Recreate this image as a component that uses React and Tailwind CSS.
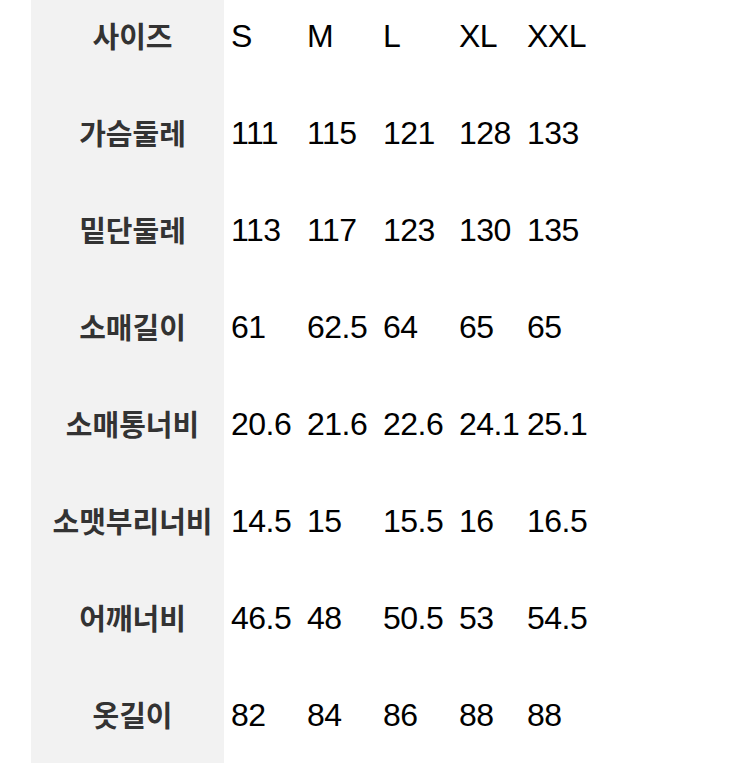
import React from 'react';

const rows = [
  { label: '사이즈', values: ['S', 'M', 'L', 'XL', 'XXL'] },
  { label: '가슴둘레', values: ['111', '115', '121', '128', '133'] },
  { label: '밑단둘레', values: ['113', '117', '123', '130', '135'] },
  { label: '소매길이', values: ['61', '62.5', '64', '65', '65'] },
  { label: '소매통너비', values: ['20.6', '21.6', '22.6', '24.1', '25.1'] },
  { label: '소맷부리너비', values: ['14.5', '15', '15.5', '16', '16.5'] },
  { label: '어깨너비', values: ['46.5', '48', '50.5', '53', '54.5'] },
  { label: '옷길이', values: ['82', '84', '86', '88', '88'] },
];

const colWidths = ['w-[76px]', 'w-[76px]', 'w-[76px]', 'w-[68px]', 'w-[90px]'];

const App = () => {
  return (
    <div className="h-[780px] w-[750px] overflow-hidden bg-white">
      <div className="-mt-[13px] pl-[31px]">
        {rows.map((row, i) => (
          <div key={i} className="flex h-[97px] items-stretch">
            <div
              className="flex w-[193px] items-center justify-center bg-[#f2f2f2] pl-[10px] text-[29px] font-bold leading-none text-[#333333]"
              style={{ fontFamily: '"Noto Sans CJK KR", sans-serif' }}
            >
              {row.label}
            </div>
            {row.values.map((v, j) => (
              <div
                key={j}
                className={`${colWidths[j]} flex items-center pl-[7px] text-[32px] leading-none tracking-[-0.5px] text-black`}
                style={{ fontFamily: '"Liberation Sans", Arial, sans-serif' }}
              >
                {v}
              </div>
            ))}
          </div>
        ))}
      </div>
    </div>
  );
};

export default App;
